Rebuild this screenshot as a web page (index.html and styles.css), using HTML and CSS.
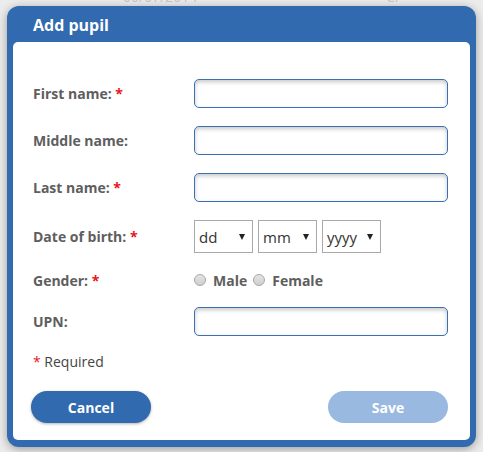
FILE: index.html
```html
<!DOCTYPE html>
<html lang="en">
<head>
<meta charset="utf-8">
<title>Add pupil</title>
<link rel="stylesheet" href="styles.css">
</head>
<body>
<div class="backdrop-row">
  <span class="bg-date">00/07/2014</span>
  <span class="bg-cell">Cl</span>
</div>
<div class="modal">
  <div class="modal-header"><h1 class="modal-title">Add pupil</h1></div>
  <form class="modal-body">
    <div class="row row-first">
      <label class="label">First name: <span class="req">*</span></label>
      <input class="text-input" type="text">
    </div>
    <div class="row">
      <label class="label">Middle name:</label>
      <input class="text-input" type="text">
    </div>
    <div class="row">
      <label class="label">Last name: <span class="req">*</span></label>
      <input class="text-input" type="text">
    </div>
    <div class="row row-dob">
      <label class="label">Date of birth: <span class="req">*</span></label>
      <div class="selects">
        <div class="select-wrap"><select class="select"><option>dd</option></select></div>
        <div class="select-wrap"><select class="select"><option>mm</option></select></div>
        <div class="select-wrap"><select class="select"><option>yyyy</option></select></div>
      </div>
    </div>
    <div class="row row-gender">
      <label class="label">Gender: <span class="req">*</span></label>
      <div class="radios">
        <span class="radio"></span><span class="radio-label">Male</span>
        <span class="radio"></span><span class="radio-label">Female</span>
      </div>
    </div>
    <div class="row row-upn">
      <label class="label">UPN:</label>
      <input class="text-input" type="text">
    </div>
    <p class="required-note"><span class="req-plain">*</span> Required</p>
    <div class="actions">
      <button type="button" class="btn btn-cancel">Cancel</button>
      <button type="button" class="btn btn-save">Save</button>
    </div>
  </form>
</div>
</body>
</html>
```
FILE: styles.css
```css
* { box-sizing: border-box; }
html, body { margin: 0; padding: 0; }
body {
  width: 483px;
  height: 452px;
  background: #ececec;
  font-family: "Open Sans", "Liberation Sans", sans-serif;
  position: relative;
  overflow: hidden;
}
.backdrop-row {
  position: relative;
  height: 6px;
  font-size: 14px;
  color: #c9c9c9;
}
.bg-date { position: absolute; left: 123px; top: -13px; }
.bg-cell { position: absolute; left: 386px; top: -13px; }

.modal {
  position: absolute;
  left: 7px;
  top: 6px;
  width: 469px;
  height: 441px;
  background: #316aae;
  border-radius: 12px;
  box-shadow: 0 2px 10px rgba(0, 0, 0, 0.35);
  padding: 0 6px 7px 6px;
  display: flex;
  flex-direction: column;
}
.modal-header {
  height: 36px;
  padding-left: 20px;
  display: flex;
  align-items: center;
}
.modal-title {
  margin: 0;
  color: #fff;
  font-size: 16px;
  font-weight: 700;
  line-height: 20px;
  padding-top: 2px;
}
.modal-body {
  margin: 0;
  background: #fff;
  border-radius: 5px;
  flex: 1;
  padding: 37px 22px 0 20px;
  display: flex;
  flex-direction: column;
}
.row {
  display: flex;
  align-items: center;
  height: 29px;
  margin-top: 18px;
}
.row-first { margin-top: 0; }
.row-dob { height: 33px; }
.row-gender { height: 20px; margin-top: 17px; }
.row-upn { margin-top: 17px; }
.label {
  width: 161px;
  flex: none;
  font-size: 14px;
  font-weight: 700;
  color: #5e5e5e;
}
.req { color: #e8141b; }
.text-input {
  width: 254px;
  height: 29px;
  border: 1px solid #3b70b4;
  border-radius: 5px;
  box-shadow: inset 0 2px 4px rgba(0, 0, 0, 0.22);
  background: #fff;
  margin: 0;
  padding: 0 6px;
  outline: none;
}
.selects { display: flex; gap: 5px; }
.select-wrap {
  position: relative;
  width: 59px;
  height: 33px;
}
.select-wrap::after {
  content: "";
  position: absolute;
  right: 8px;
  top: 14px;
  border-left: 3px solid transparent;
  border-right: 3px solid transparent;
  border-top: 6px solid #222;
  pointer-events: none;
}
.select {
  -webkit-appearance: none;
  appearance: none;
  width: 100%;
  height: 100%;
  margin: 0;
  border: 1px solid #a9a9a9;
  border-radius: 0;
  background: #fff;
  font-family: "Open Sans", "Liberation Sans", sans-serif;
  font-size: 15px;
  color: #333;
  padding: 0 0 0 4px;
}
.radios { display: flex; align-items: center; }
.radio {
  width: 12px;
  height: 12px;
  border-radius: 50%;
  border: 1px solid #a8a8a8;
  background: linear-gradient(#e4e4e4, #cfcfcf);
  margin-right: 7px;
}
.radio-label {
  font-size: 14px;
  font-weight: 700;
  color: #5e5e5e;
  margin-right: 6px;
}
.required-note {
  margin: 16px 0 0 0;
  height: 20px;
  line-height: 20px;
  font-size: 14px;
  color: #444;
}
.req-plain { color: #e8141b; }
.actions {
  margin-top: 19px;
  display: flex;
  justify-content: space-between;
  padding-left: -2px;
}
.btn {
  width: 120px;
  height: 32px;
  border: none;
  border-radius: 16px;
  color: #fff;
  font-family: "Open Sans", "Liberation Sans", sans-serif;
  font-size: 14px;
  font-weight: 700;
  padding: 0;
}
.btn-cancel {
  background: #316aae;
  margin-left: -2px;
  box-shadow: 0 1px 3px rgba(0, 0, 0, 0.3);
}
.btn-save {
  background: #99b9e1;
}
```
